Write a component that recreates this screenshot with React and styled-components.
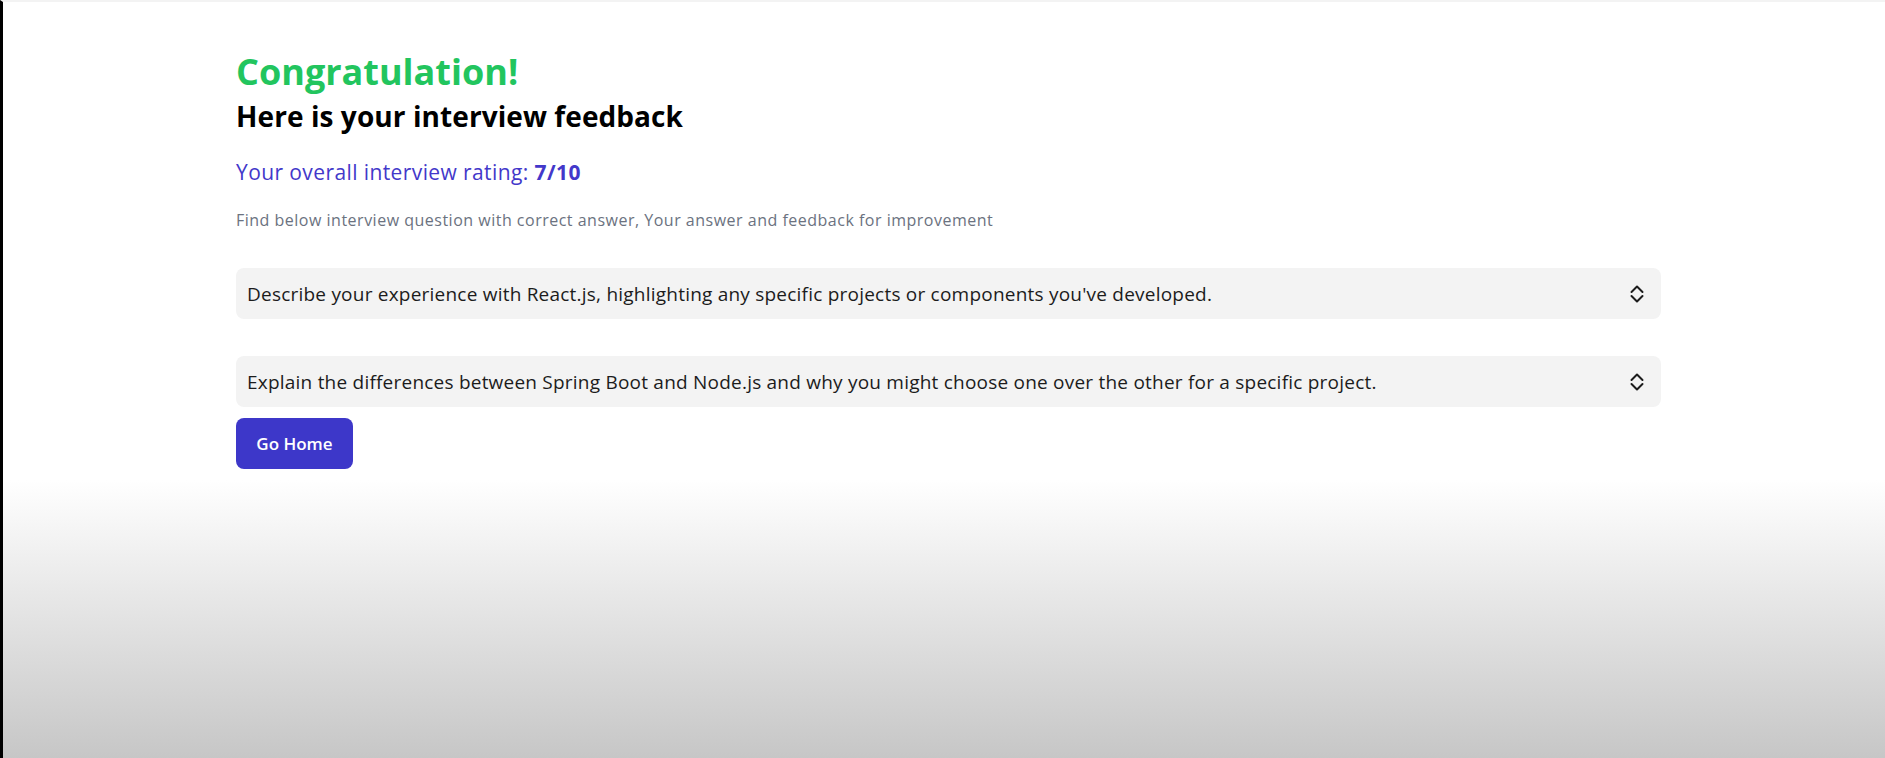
import React from "react";
import styled, { createGlobalStyle } from "styled-components";

const Global = createGlobalStyle`
  html, body { margin: 0; padding: 0; }
  body { font-family: "Open Sans", "Lato", sans-serif; }
  * { box-sizing: border-box; }
`;

const Page = styled.div`
  min-height: 758px;
  border-left: 3px solid #000;
  border-top: 2px solid #f3f3f3;
  background: linear-gradient(to bottom, #ffffff 0px, #ffffff 478px, #c6c6c6 758px);
  padding: 50px 0 0 233px;
`;

const Content = styled.div`
  width: 1425px;
  display: flex;
  flex-direction: column;
`;

const Title = styled.h1`
  margin: 0;
  font-size: 36px;
  line-height: 40px;
  font-weight: 700;
  letter-spacing: 0px;
  color: #22c55e;
`;

const Subtitle = styled.h2`
  margin: 8px 0 0;
  font-size: 28px;
  line-height: 32px;
  font-weight: 700;
  letter-spacing: 0.08px;
  color: #000;
`;

const Rating = styled.h3`
  margin: 26px 0 0;
  font-size: 21px;
  line-height: 28px;
  font-weight: 400;
  letter-spacing: 0.4px;
  color: #4338ca;
  strong { font-weight: 700; }
`;

const Note = styled.p`
  margin: 24px 0 0;
  font-size: 16px;
  line-height: 20px;
  letter-spacing: 0.5px;
  color: #6b7280;
`;

const List = styled.div`
  margin-top: 38px;
  display: flex;
  flex-direction: column;
  gap: 37px;
`;

const Item = styled.button`
  all: unset;
  display: flex;
  align-items: center;
  justify-content: space-between;
  height: 51px;
  padding: 0 17px 0 11px;
  background: #f3f3f3;
  border-radius: 8px;
  font-family: "Open Sans", "Lato", sans-serif;
  font-size: 19px;
  letter-spacing: 0.22px;
  color: #1c1c1c;
  cursor: pointer;
`;

const HomeButton = styled.button`
  all: unset;
  margin-top: 11px;
  width: 117px;
  height: 51px;
  display: flex;
  align-items: center;
  justify-content: center;
  background: #3d37c9;
  color: #fff;
  border-radius: 8px;
  font-family: "Open Sans", "Lato", sans-serif;
  font-size: 17px;
  font-weight: 600;
  cursor: pointer;
`;

const Chevrons = () => (
  <svg width="14" height="20" viewBox="0 0 14 20" fill="none" stroke="#1c1c1c" strokeWidth="2" strokeLinecap="round" strokeLinejoin="round">
    <path d="M1.5 8 L7 2.5 L12.5 8" />
    <path d="M1.5 12 L7 17.5 L12.5 12" />
  </svg>
);

const questions = [
  "Describe your experience with React.js, highlighting any specific projects or components you've developed.",
  "Explain the differences between Spring Boot and Node.js and why you might choose one over the other for a specific project.",
];

export default function App() {
  return (
    <>
      <Global />
      <Page>
        <Content>
          <Title>Congratulation!</Title>
          <Subtitle>Here is your interview feedback</Subtitle>
          <Rating>
            Your overall interview rating: <strong>7/10</strong>
          </Rating>
          <Note>
            Find below interview question with correct answer, Your answer and feedback for improvement
          </Note>
          <List>
            {questions.map((q) => (
              <Item key={q}>
                <span>{q}</span>
                <Chevrons />
              </Item>
            ))}
          </List>
          <div>
            <HomeButton>Go Home</HomeButton>
          </div>
        </Content>
      </Page>
    </>
  );
}
